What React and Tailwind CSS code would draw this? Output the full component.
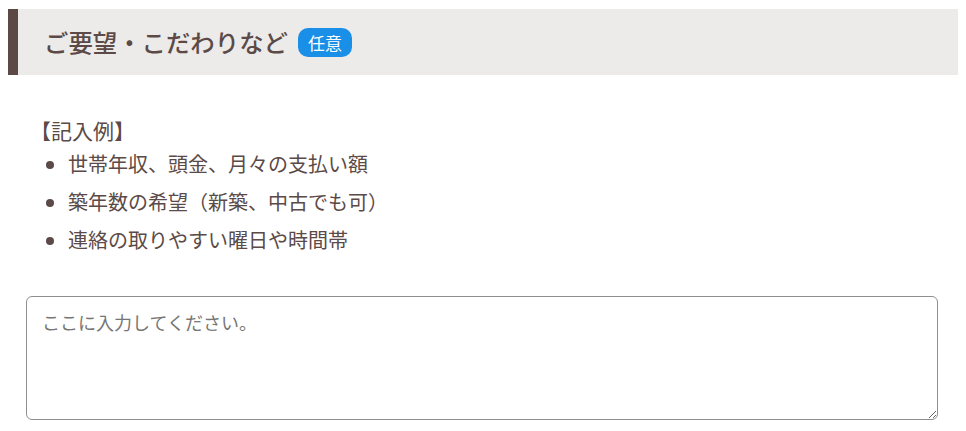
export default function App() {
  const examples = [
    "世帯年収、頭金、月々の支払い額",
    "築年数の希望（新築、中古でも可）",
    "連絡の取りやすい曜日や時間帯",
  ];

  return (
    <div
      className="bg-white px-2 pt-[9px] text-[#5b4a47]"
      style={{ fontFamily: '"Noto Sans CJK JP", "Noto Sans", sans-serif' }}
    >
      {/* Section heading */}
      <div className="flex h-[66px] items-center border-l-[10px] border-[#5c4845] bg-[#ecebe9] pl-[26px]">
        <h2 className="text-[24.4px] font-medium leading-none">ご要望・こだわりなど</h2>
        <span className="ml-[10px] rounded-[10px] bg-[#1a8fe8] px-[10px] py-[4px] text-[17px] leading-[21px] text-white">
          任意
        </span>
      </div>

      {/* Examples */}
      <div className="pl-[18px] pr-[20px] pt-[41px]">
        <p className="ml-[4px] text-[21px] leading-[28px]">【記入例】</p>
        <ul className="mt-[1px] list-disc pl-[42px] text-[20px] leading-[38px] marker:text-[#5b4a47]">
          {examples.map((item) => (
            <li key={item}>{item}</li>
          ))}
        </ul>

        <textarea
          className="mt-[37px] block h-[124px] w-full rounded-[6px] border border-[#8f8f8f] px-[15px] py-[12px] text-[18px] leading-[26px] text-[#5b4a47] placeholder:text-[#767676] focus:outline-none"
          placeholder="ここに入力してください。"
        />
      </div>
    </div>
  );
}
